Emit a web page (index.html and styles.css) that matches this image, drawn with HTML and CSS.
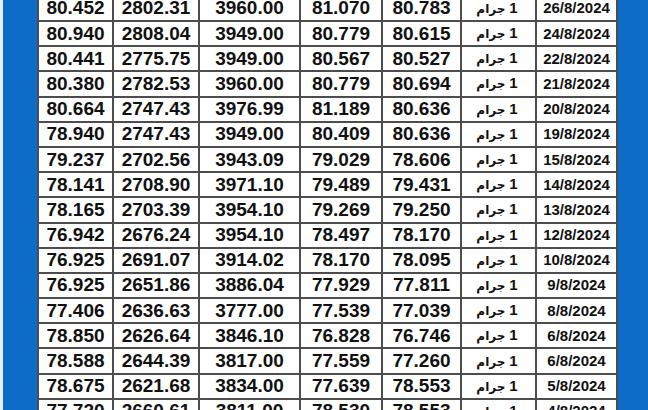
FILE: index.html
```html
<!DOCTYPE html>
<html lang="ar">
<head>
<meta charset="utf-8">
<link rel="stylesheet" href="styles.css">
</head>
<body>
<div class="page">
  <div class="strip"></div>
  <div class="frame">
    <table class="prices">
      <colgroup>
        <col class="c1"><col class="c2"><col class="c3"><col class="c4"><col class="c5"><col class="c6"><col class="c7">
      </colgroup>
      <tbody>
        <tr><td>80.452</td><td>2802.31</td><td>3960.00</td><td>81.070</td><td>80.783</td><td class="unit"><span class="unit-in" dir="rtl"><span class="num">1</span> <span class="ar">جرام</span></span></td><td class="date">26/8/2024</td></tr>
        <tr><td>80.940</td><td>2808.04</td><td>3949.00</td><td>80.779</td><td>80.615</td><td class="unit"><span class="unit-in" dir="rtl"><span class="num">1</span> <span class="ar">جرام</span></span></td><td class="date">24/8/2024</td></tr>
        <tr><td>80.441</td><td>2775.75</td><td>3949.00</td><td>80.567</td><td>80.527</td><td class="unit"><span class="unit-in" dir="rtl"><span class="num">1</span> <span class="ar">جرام</span></span></td><td class="date">22/8/2024</td></tr>
        <tr><td>80.380</td><td>2782.53</td><td>3960.00</td><td>80.779</td><td>80.694</td><td class="unit"><span class="unit-in" dir="rtl"><span class="num">1</span> <span class="ar">جرام</span></span></td><td class="date">21/8/2024</td></tr>
        <tr><td>80.664</td><td>2747.43</td><td>3976.99</td><td>81.189</td><td>80.636</td><td class="unit"><span class="unit-in" dir="rtl"><span class="num">1</span> <span class="ar">جرام</span></span></td><td class="date">20/8/2024</td></tr>
        <tr><td>78.940</td><td>2747.43</td><td>3949.00</td><td>80.409</td><td>80.636</td><td class="unit"><span class="unit-in" dir="rtl"><span class="num">1</span> <span class="ar">جرام</span></span></td><td class="date">19/8/2024</td></tr>
        <tr><td>79.237</td><td>2702.56</td><td>3943.09</td><td>79.029</td><td>78.606</td><td class="unit"><span class="unit-in" dir="rtl"><span class="num">1</span> <span class="ar">جرام</span></span></td><td class="date">15/8/2024</td></tr>
        <tr><td>78.141</td><td>2708.90</td><td>3971.10</td><td>79.489</td><td>79.431</td><td class="unit"><span class="unit-in" dir="rtl"><span class="num">1</span> <span class="ar">جرام</span></span></td><td class="date">14/8/2024</td></tr>
        <tr><td>78.165</td><td>2703.39</td><td>3954.10</td><td>79.269</td><td>79.250</td><td class="unit"><span class="unit-in" dir="rtl"><span class="num">1</span> <span class="ar">جرام</span></span></td><td class="date">13/8/2024</td></tr>
        <tr><td>76.942</td><td>2676.24</td><td>3954.10</td><td>78.497</td><td>78.170</td><td class="unit"><span class="unit-in" dir="rtl"><span class="num">1</span> <span class="ar">جرام</span></span></td><td class="date">12/8/2024</td></tr>
        <tr><td>76.925</td><td>2691.07</td><td>3914.02</td><td>78.170</td><td>78.095</td><td class="unit"><span class="unit-in" dir="rtl"><span class="num">1</span> <span class="ar">جرام</span></span></td><td class="date">10/8/2024</td></tr>
        <tr><td>76.925</td><td>2651.86</td><td>3886.04</td><td>77.929</td><td>77.811</td><td class="unit"><span class="unit-in" dir="rtl"><span class="num">1</span> <span class="ar">جرام</span></span></td><td class="date">9/8/2024</td></tr>
        <tr><td>77.406</td><td>2636.63</td><td>3777.00</td><td>77.539</td><td>77.039</td><td class="unit"><span class="unit-in" dir="rtl"><span class="num">1</span> <span class="ar">جرام</span></span></td><td class="date">8/8/2024</td></tr>
        <tr><td>78.850</td><td>2626.64</td><td>3846.10</td><td>76.828</td><td>76.746</td><td class="unit"><span class="unit-in" dir="rtl"><span class="num">1</span> <span class="ar">جرام</span></span></td><td class="date">6/8/2024</td></tr>
        <tr><td>78.588</td><td>2644.39</td><td>3817.00</td><td>77.559</td><td>77.260</td><td class="unit"><span class="unit-in" dir="rtl"><span class="num">1</span> <span class="ar">جرام</span></span></td><td class="date">6/8/2024</td></tr>
        <tr><td>78.675</td><td>2621.68</td><td>3834.00</td><td>77.639</td><td>78.553</td><td class="unit"><span class="unit-in" dir="rtl"><span class="num">1</span> <span class="ar">جرام</span></span></td><td class="date">5/8/2024</td></tr>
        <tr><td>77.720</td><td>2660.61</td><td>3811.00</td><td>78.530</td><td>78.553</td><td class="unit"><span class="unit-in" dir="rtl"><span class="num">1</span> <span class="ar">جرام</span></span></td><td class="date">4/8/2024</td></tr>
      </tbody>
    </table>
  </div>
</div>
</body>
</html>
```
FILE: styles.css
```css
html, body {
  margin: 0;
  padding: 0;
  height: 100%;
  overflow: hidden;
  background: #0d6cc8;
}
.page {
  display: flex;
  height: 410px;
  overflow: hidden;
}
.strip {
  width: 3px;
  flex: none;
  background: #e9eef3;
}
.frame {
  flex: 1;
  background: #0d6cc8;
  padding: 0 30px 0 34px;
  overflow: hidden;
}
.prices {
  width: 581px;
  table-layout: fixed;
  border-collapse: collapse;
  margin-top: -5.2px;
  background: #ffffff;
  font-family: "Liberation Sans", Arial, "DejaVu Sans", sans-serif;
  font-weight: bold;
  color: #111111;
}
.c1 { width: 75px; }
.c2 { width: 86px; }
.c3 { width: 101px; }
.c4 { width: 82px; }
.c5 { width: 79px; }
.c6 { width: 75px; }
.c7 { width: 81px; }
.prices td {
  border: 2px solid #4d4d4d;
  height: 23.2px;
  padding: 0;
  text-align: center;
  vertical-align: middle;
  font-size: 19px;
  line-height: 20px;
  white-space: nowrap;
  overflow: hidden;
}
.prices td.date {
  font-size: 15px;
}
.prices td.unit {
  font-size: 14px;
  padding-right: 3px;
}
.unit-in {
  display: inline-block;
}
.unit-in .num {
  font-family: "Liberation Sans", Arial, sans-serif;
  font-size: 15px;
  font-weight: bold;
}
.unit-in .ar {
  font-family: "DejaVu Sans", sans-serif;
  font-size: 12px;
  font-weight: bold;
}
```
